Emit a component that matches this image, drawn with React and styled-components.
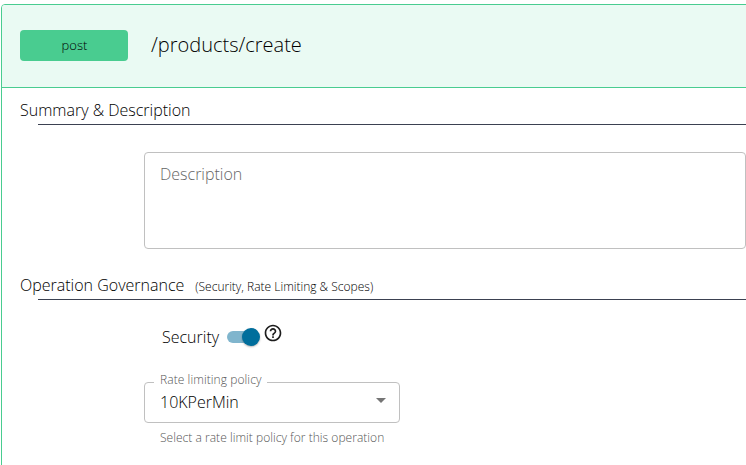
import React from "react";
import styled, { createGlobalStyle } from "styled-components";

const GlobalStyle = createGlobalStyle`
  *, *::before, *::after { box-sizing: border-box; }
  html, body { margin: 0; overflow: hidden; background: #fff; }
  body { font-family: "Open Sans", sans-serif; font-weight: 300; color: #000; }
`;

const Page = styled.main`
  width: 746px;
  height: 465px;
  padding: 4px 0 0 1px;
  overflow: hidden;
`;

const Panel = styled.article`
  width: 800px;
  height: 520px;
  border: 1px solid #49cc90;
  border-radius: 4px;
`;

const Header = styled.header`
  display: flex;
  align-items: center;
  gap: 23px;
  height: 83px;
  padding-left: 18px;
  background: #eafaf3;
  border-bottom: 1px solid #49cc90;
  border-radius: 3px 3px 0 0;
`;

const Method = styled.button`
  width: 108px;
  height: 31px;
  margin: 0 0 1px;
  padding: 0 0 0 1px;
  border: 0;
  border-radius: 4px;
  background: #49cc90;
  color: #000;
  font: 300 13px/31px "Open Sans", sans-serif;
`;

const Path = styled.h1`
  margin: 0 0 3px;
  font-size: 20px;
  line-height: 28px;
  font-weight: 300;
  white-space: nowrap;
`;

const SectionTitle = styled.h2`
  display: flex;
  align-items: baseline;
  gap: 11px;
  height: 36px;
  margin: 0;
  padding: 10px 0 0 18px;
  font-size: 16px;
  line-height: 24px;
  font-weight: 300;
  white-space: nowrap;
`;

const Note = styled.small`
  font-size: 12px;
`;

const Rule = styled.hr`
  height: 1px;
  margin: 0 0 0 36px;
  border: 0;
  background: #3b4151;
`;

const Description = styled.textarea`
  display: block;
  width: 602px;
  height: 97px;
  margin: 27px 0 14px 142px;
  padding: 9px 15px;
  resize: none;
  outline: 0;
  border: 1px solid #c0c0c0;
  border-radius: 4px;
  background: #fff;
  font: 300 16px/24px "Open Sans", sans-serif;
  &::placeholder { color: #666; opacity: 1; }
`;

const SecurityRow = styled.div`
  display: flex;
  align-items: center;
  height: 18px;
  margin: 28px 0 0 160px;
`;

const FieldLabel = styled.span`
  width: 65px;
  font-size: 16px;
  line-height: 24px;
`;

const Switch = styled.span`
  display: flex;
  align-items: center;
  width: 33px;
  height: 12px;
  padding-left: 15px;
  border-radius: 6px;
  background: linear-gradient(to right, #80b5cd 26px, transparent 26px);
`;

const Thumb = styled.span`
  flex: none;
  width: 18px;
  height: 18px;
  border-radius: 50%;
  background: #006e9c;
  box-shadow: 0 1px 2px rgba(0, 0, 0, 0.3);
`;

const HelpIcon = styled.svg`
  width: 20px;
  height: 20px;
  margin: 0 0 9px 3px;
  fill: #1d1d1d;
`;

const Select = styled.fieldset`
  display: flex;
  align-items: center;
  justify-content: space-between;
  position: relative;
  width: 256px;
  height: 41px;
  margin: 36px 0 0 142px;
  padding: 0 13px 0 15px;
  border: 1px solid #c0c0c0;
  border-radius: 4px;
`;

const FloatingLabel = styled.label`
  position: absolute;
  left: 9px;
  top: -11px;
  width: 113px;
  padding-left: 6px;
  background: #fff;
  color: #555;
  font-size: 12px;
  line-height: 16px;
  letter-spacing: 0.08px;
  white-space: nowrap;
`;

const Value = styled.span`
  font-size: 16px;
  line-height: 24px;
  margin-top: -2px;
`;

const Arrow = styled.svg`
  width: 10px;
  height: 5px;
  margin-top: -4px;
  fill: #757575;
`;

const Helper = styled.p`
  margin: 5px 0 0 158px;
  color: #555;
  font-size: 12px;
  line-height: 20px;
  letter-spacing: 0.03px;
  white-space: nowrap;
`;

export default function App() {
  return (
    <Page>
      <GlobalStyle />
      <Panel>
        <Header>
          <Method>post</Method>
          <Path>/products/create</Path>
        </Header>
        <section>
          <SectionTitle>Summary &amp; Description</SectionTitle>
          <Rule />
          <Description placeholder="Description" />
        </section>
        <section>
          <SectionTitle>
            Operation Governance
            <Note>(Security, Rate Limiting &amp; Scopes)</Note>
          </SectionTitle>
          <Rule />
          <SecurityRow>
            <FieldLabel>Security</FieldLabel>
            <Switch role="switch" aria-checked="true"><Thumb /></Switch>
            <HelpIcon viewBox="0 0 24 24">
              <path d="M11 18h2v-2h-2v2zm1-16C6.48 2 2 6.48 2 12s4.480 10 10 10 10-4.480 10-10S17.520 2 12 2zm0 18c-4.410 0-8-3.590-8-8s3.590-8 8-8 8 3.590 8 8-3.590 8-8 8zm0-14c-2.210 0-4 1.790-4 4h2c0-1.100.9-2 2-2s2 .9 2 2c0 2-3 1.750-3 5h2c0-2.250 3-2.500 3-5 0-2.210-1.790-4-4-4z" />
            </HelpIcon>
          </SecurityRow>
          <Select>
            <FloatingLabel>Rate limiting policy</FloatingLabel>
            <Value>10KPerMin</Value>
            <Arrow viewBox="0 0 10 5"><path d="M0 0h10L5 5z" /></Arrow>
          </Select>
          <Helper>Select a rate limit policy for this operation</Helper>
        </section>
      </Panel>
    </Page>
  );
}
